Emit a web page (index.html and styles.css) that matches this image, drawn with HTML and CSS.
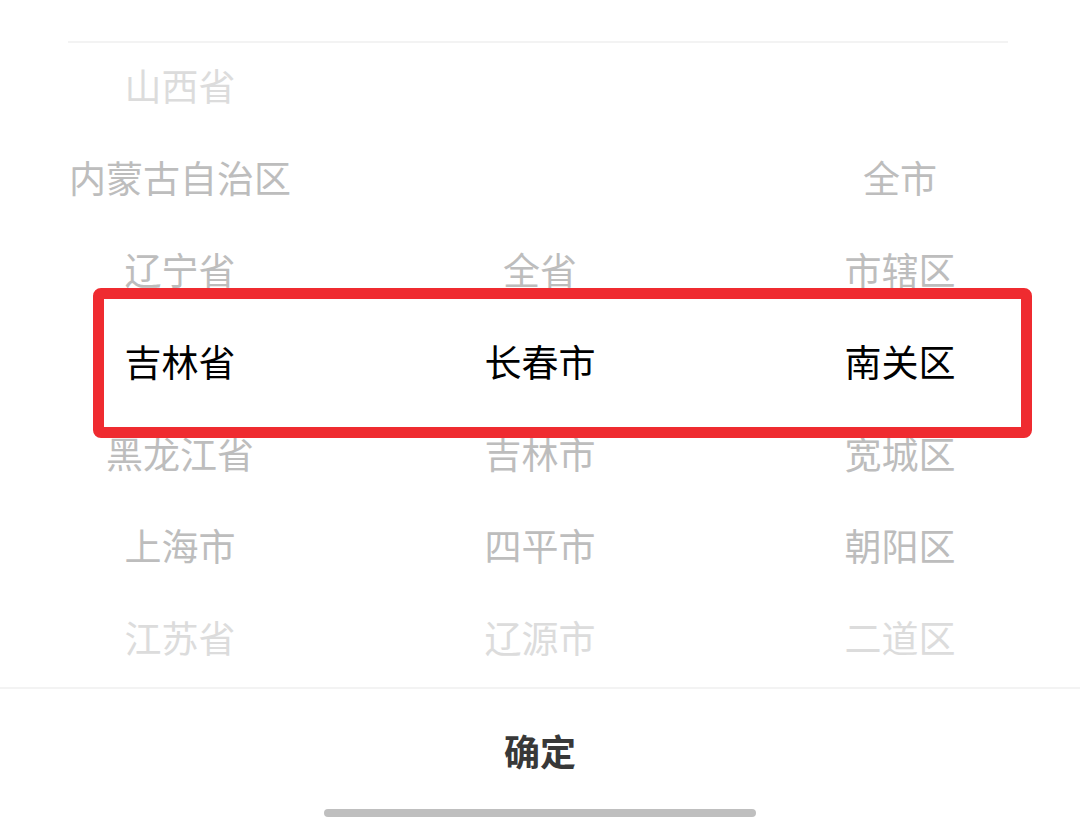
FILE: index.html
```html
<!DOCTYPE html>
<html lang="zh-CN">
<head>
<meta charset="utf-8">
<title>地区选择</title>
<link rel="stylesheet" href="styles.css">
</head>
<body>
<div class="sheet">
  <div class="top-line"></div>
  <div class="picker">
    <div class="col">
      <div class="item far">山西省</div>
      <div class="item near">内蒙古自治区</div>
      <div class="item near">辽宁省</div>
      <div class="item sel">吉林省</div>
      <div class="item near">黑龙江省</div>
      <div class="item near">上海市</div>
      <div class="item far">江苏省</div>
    </div>
    <div class="col">
      <div class="item far"></div>
      <div class="item near"></div>
      <div class="item near">全省</div>
      <div class="item sel">长春市</div>
      <div class="item near">吉林市</div>
      <div class="item near">四平市</div>
      <div class="item far">辽源市</div>
    </div>
    <div class="col">
      <div class="item far"></div>
      <div class="item near">全市</div>
      <div class="item near">市辖区</div>
      <div class="item sel">南关区</div>
      <div class="item near">宽城区</div>
      <div class="item near">朝阳区</div>
      <div class="item far">二道区</div>
    </div>
    <div class="highlight"></div>
  </div>
  <div class="footer">
    <div class="confirm">确定</div>
  </div>
  <div class="home-bar"></div>
</div>
</body>
</html>
```

FILE: styles.css
```css
html, body {
  margin: 0;
  padding: 0;
  background: #ffffff;
}

body {
  font-family: "Noto Sans CJK SC", "Noto Sans", sans-serif;
  width: 1080px;
  height: 820px;
  overflow: hidden;
}

.sheet {
  display: flex;
  flex-direction: column;
  padding-top: 41px;
}

.top-line {
  height: 2px;
  margin: 0 72px 0 68px;
  background: #f3f3f3;
}

.picker {
  position: relative;
  display: grid;
  grid-template-columns: repeat(3, 1fr);
}

.col {
  display: flex;
  flex-direction: column;
}

.item {
  height: 92px;
  line-height: 84px;
  text-align: center;
  font-size: 37px;
  white-space: nowrap;
}

.item.far {
  color: #dcdcdc;
}

.item.near {
  color: #bdbdbd;
}

.item.sel {
  color: #000000;
}

.highlight {
  position: absolute;
  left: 93px;
  top: 245px;
  width: 939px;
  height: 150px;
  box-sizing: border-box;
  border: 11px solid #ef2b30;
  border-radius: 8px;
}

.footer {
  border-top: 2px solid #f3f3f3;
  padding-top: 36px;
  display: flex;
  justify-content: center;
}

.confirm {
  font-size: 36px;
  line-height: 50px;
  font-weight: 700;
  color: #383838;
}

.home-bar {
  width: 432px;
  height: 8px;
  margin: 34px auto 0;
  border-radius: 4px;
  background: #bfbfbf;
}
```
